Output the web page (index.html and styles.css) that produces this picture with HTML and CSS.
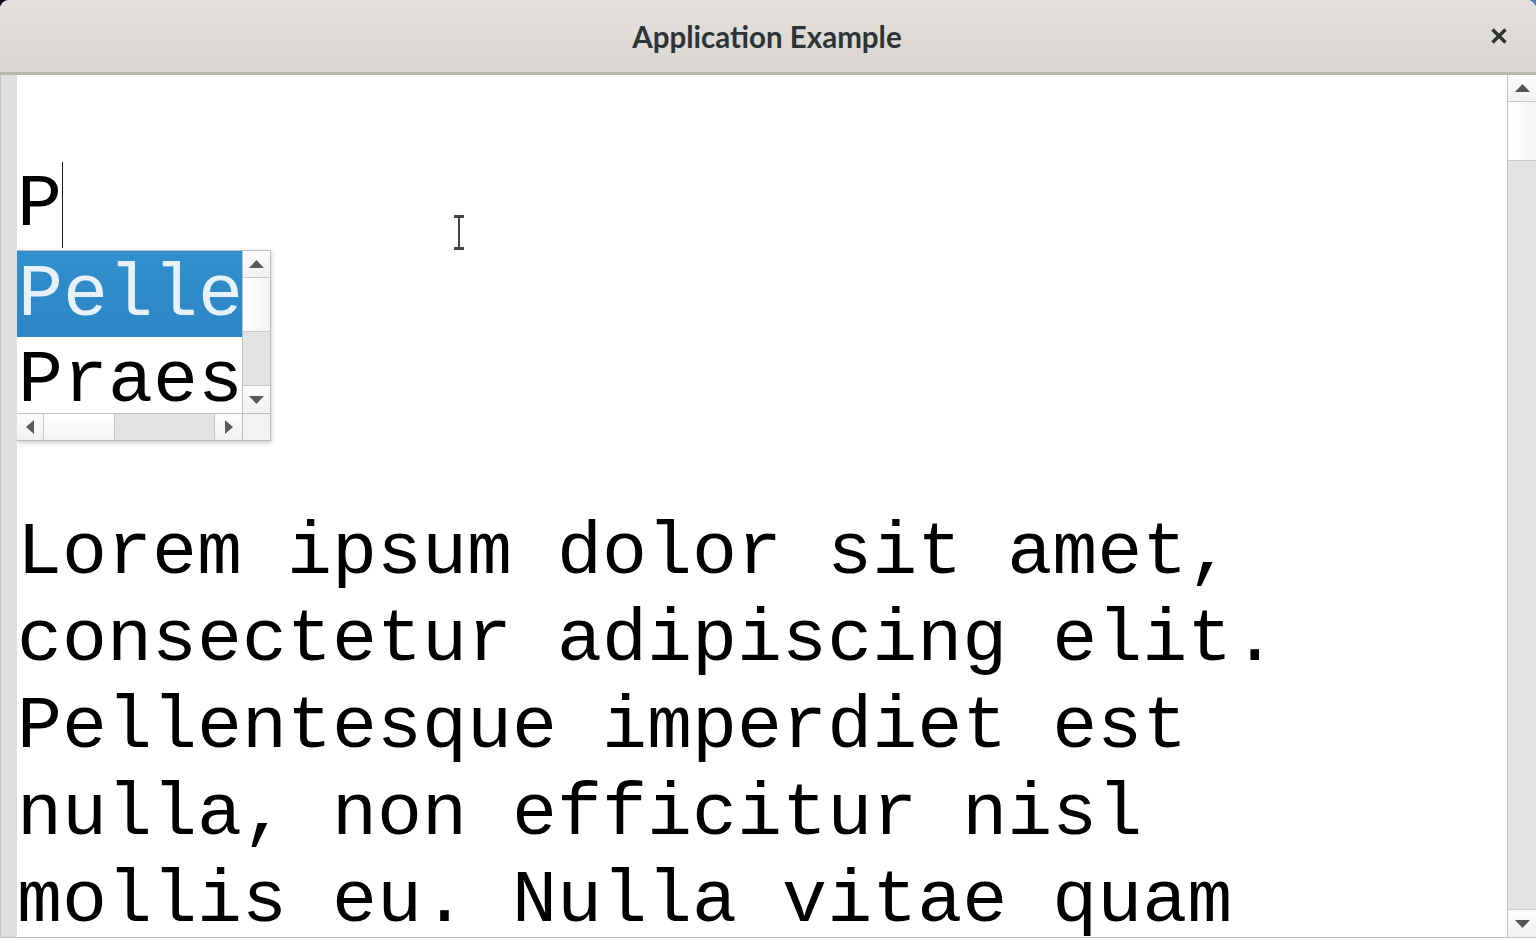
FILE: index.html
```html
<!DOCTYPE html>
<html lang="en">

<head>
    <meta charset="UTF-8">
    <meta name="viewport" content="width=device-width, initial-scale=1.0">
    <title>Application Example</title>
    <link rel="stylesheet" href="styles.css">
</head>

<body>
    <div class="window">
        <header class="titlebar">
            <span class="title">Application Example</span>
            <button class="close" aria-label="Close">
                <svg width="18" height="18" viewBox="0 0 18 18">
                    <path d="M2.5 2.5 L15.5 15.5 M15.5 2.5 L2.5 15.5" stroke="#2e3436" stroke-width="3.4" fill="none" />
                </svg>
            </button>
        </header>

        <div class="main">
            <div class="gutter"></div>

            <div class="editor">
                <div class="buffer">
                    <p class="line">P<span class="caret"></span></p>
                    <p class="paragraph">Lorem ipsum dolor sit amet, consectetur adipiscing elit. Pellentesque imperdiet est nulla, non efficitur nisl mollis eu. Nulla vitae quam sed lorem facilisis tincidunt.</p>
                </div>

                <!-- completion popup -->
                <div class="completer">
                    <div class="completer-list">
                        <div class="item selected">Pellentesque</div>
                        <div class="item">Praesent</div>
                    </div>
                    <div class="sb sb-v">
                        <div class="sb-btn sb-up">
                            <svg width="15" height="8" viewBox="0 0 15 8"><polygon points="0,8 15,8 7.5,0" fill="#5a5a5a" /></svg>
                        </div>
                        <div class="sb-thumb"></div>
                        <div class="sb-track"></div>
                        <div class="sb-btn sb-down">
                            <svg width="15" height="8" viewBox="0 0 15 8"><polygon points="0,0 15,0 7.5,8" fill="#5a5a5a" /></svg>
                        </div>
                    </div>
                    <div class="sb sb-h">
                        <div class="sb-btn sb-left">
                            <svg width="8" height="14" viewBox="0 0 8 14"><polygon points="8,0 8,14 0,7" fill="#5a5a5a" /></svg>
                        </div>
                        <div class="sb-thumb"></div>
                        <div class="sb-track"></div>
                        <div class="sb-btn sb-right">
                            <svg width="8" height="14" viewBox="0 0 8 14"><polygon points="0,0 0,14 8,7" fill="#5a5a5a" /></svg>
                        </div>
                    </div>
                    <div class="sb-corner"></div>
                </div>

                <svg class="ibeam" width="16" height="40" viewBox="0 0 16 40">
                    <path d="M3 2 H13 V5 H9 V34 H13 V37 H3 V34 H7 V5 H3 Z" fill="#444" stroke="#fff" stroke-width="2" paint-order="stroke" />
                </svg>
            </div>

            <div class="scrollbar">
                <div class="sb-btn sb-up">
                    <svg width="15" height="8" viewBox="0 0 15 8"><polygon points="0,8 15,8 7.5,0" fill="#555" /></svg>
                </div>
                <div class="sb-thumb"></div>
                <div class="sb-track"></div>
                <div class="sb-btn sb-down">
                    <svg width="15" height="8" viewBox="0 0 15 8"><polygon points="0,0 15,0 7.5,8" fill="#555" /></svg>
                </div>
            </div>
        </div>
    </div>
</body>

</html>
```

FILE: styles.css
```css
body {
    margin: 0;
    height: 100vh;
    overflow: hidden;
    background: linear-gradient(90deg, #0b0f17, #4f7cb4);
    font-family: "Liberation Mono", monospace;
}

.window {
    height: 100vh;
    display: flex;
    flex-direction: column;
    border-radius: 9px 9px 0 0;
    overflow: hidden;
    background: #fff;
}

/* title bar */

.titlebar {
    position: relative;
    height: 72px;
    flex-shrink: 0;
    display: flex;
    justify-content: center;
    align-items: center;
    background: linear-gradient(#e4e1dd, #d9d5d0);
    border-top: 1px solid #f2f0ee;
    border-bottom: 3px solid #bbb6b0;
    box-sizing: content-box;
    margin-top: -1px;
}

.title {
    font-family: Lato, "Open Sans", sans-serif;
    font-weight: 700;
    font-size: 29.5px;
    color: #2e3436;
    margin-left: -2px;
}

.close {
    position: absolute;
    right: 22px;
    top: 21px;
    width: 30px;
    height: 30px;
    padding: 0;
    border: none;
    background: transparent;
    display: flex;
    justify-content: center;
    align-items: center;
}

/* editor area */

.main {
    flex: 1;
    display: flex;
    min-height: 0;
    border-bottom: 1px solid #bdbdbd;
}

.gutter {
    width: 16px;
    flex-shrink: 0;
    background: #dfdfdf;
    border-left: 1px solid #c4c4c4;
}

.editor {
    flex: 1;
    position: relative;
    overflow: hidden;
    background: #fff;
}

.buffer {
    padding-top: 87px;
    font-size: 75px;
    line-height: 87px;
    color: #000;
}

.buffer p {
    margin: 0;
}

.line {
    height: 87px;
    margin-bottom: 261px !important;
}

.caret {
    display: inline-block;
    width: 1px;
    height: 86px;
    background: #1a1a1a;
    vertical-align: top;
}

.paragraph {
    width: 29ch;
}

.ibeam {
    position: absolute;
    left: 434px;
    top: 138px;
}

/* completion popup */

.completer {
    position: absolute;
    left: -1px;
    top: 175px;
    width: 253px;
    height: 189px;
    display: grid;
    grid-template-columns: 225px 28px;
    grid-template-rows: 162px 27px;
    border: 1px solid #bababa;
    background: #fff;
    box-shadow: 1px 2px 5px rgba(0, 0, 0, 0.18);
}

.completer-list {
    overflow: hidden;
}

.item {
    height: 86px;
    box-sizing: border-box;
    padding: 4px 0 0 1px;
    font-size: 75px;
    line-height: 82px;
    white-space: nowrap;
    color: #000;
}

.item.selected {
    background: linear-gradient(#3190cd, #2c86c5);
    color: #e6f1fa;
}

/* scrollbars */

.sb-btn {
    display: flex;
    justify-content: center;
    align-items: center;
    background: linear-gradient(#fcfcfc, #f1f1f1);
    flex-shrink: 0;
}

.sb-thumb {
    background: linear-gradient(90deg, #ffffff, #f4f4f4);
    flex-shrink: 0;
}

.sb-track {
    flex: 1;
    background: #e3e3e3;
}

.sb {
    display: flex;
}

.sb-v {
    flex-direction: column;
    border-left: 1px solid #c0c0c0;
}

.sb-v .sb-up {
    height: 26px;
    border-bottom: 1px solid #c8c8c8;
}

.sb-v .sb-thumb {
    height: 53px;
    border-bottom: 1px solid #c8c8c8;
}

.sb-v .sb-down {
    height: 27px;
    border-top: 1px solid #c8c8c8;
}

.sb-h {
    border-top: 1px solid #c0c0c0;
}

.sb-h .sb-left {
    width: 26px;
    border-right: 1px solid #c8c8c8;
}

.sb-h .sb-thumb {
    width: 70px;
    border-right: 1px solid #c8c8c8;
    background: linear-gradient(#ffffff, #f4f4f4);
}

.sb-h .sb-right {
    width: 27px;
    border-left: 1px solid #c8c8c8;
}

.sb-corner {
    border-top: 1px solid #c0c0c0;
    border-left: 1px solid #c0c0c0;
    background: #f3f3f3;
}

.scrollbar {
    width: 28px;
    flex-shrink: 0;
    display: flex;
    flex-direction: column;
    border-left: 1px solid #c4c4c4;
}

.scrollbar .sb-up {
    height: 26px;
    border-bottom: 1px solid #cacaca;
}

.scrollbar .sb-thumb {
    height: 58px;
    border-bottom: 1px solid #cacaca;
}

.scrollbar .sb-down {
    height: 27px;
    border-top: 1px solid #cacaca;
}
```
